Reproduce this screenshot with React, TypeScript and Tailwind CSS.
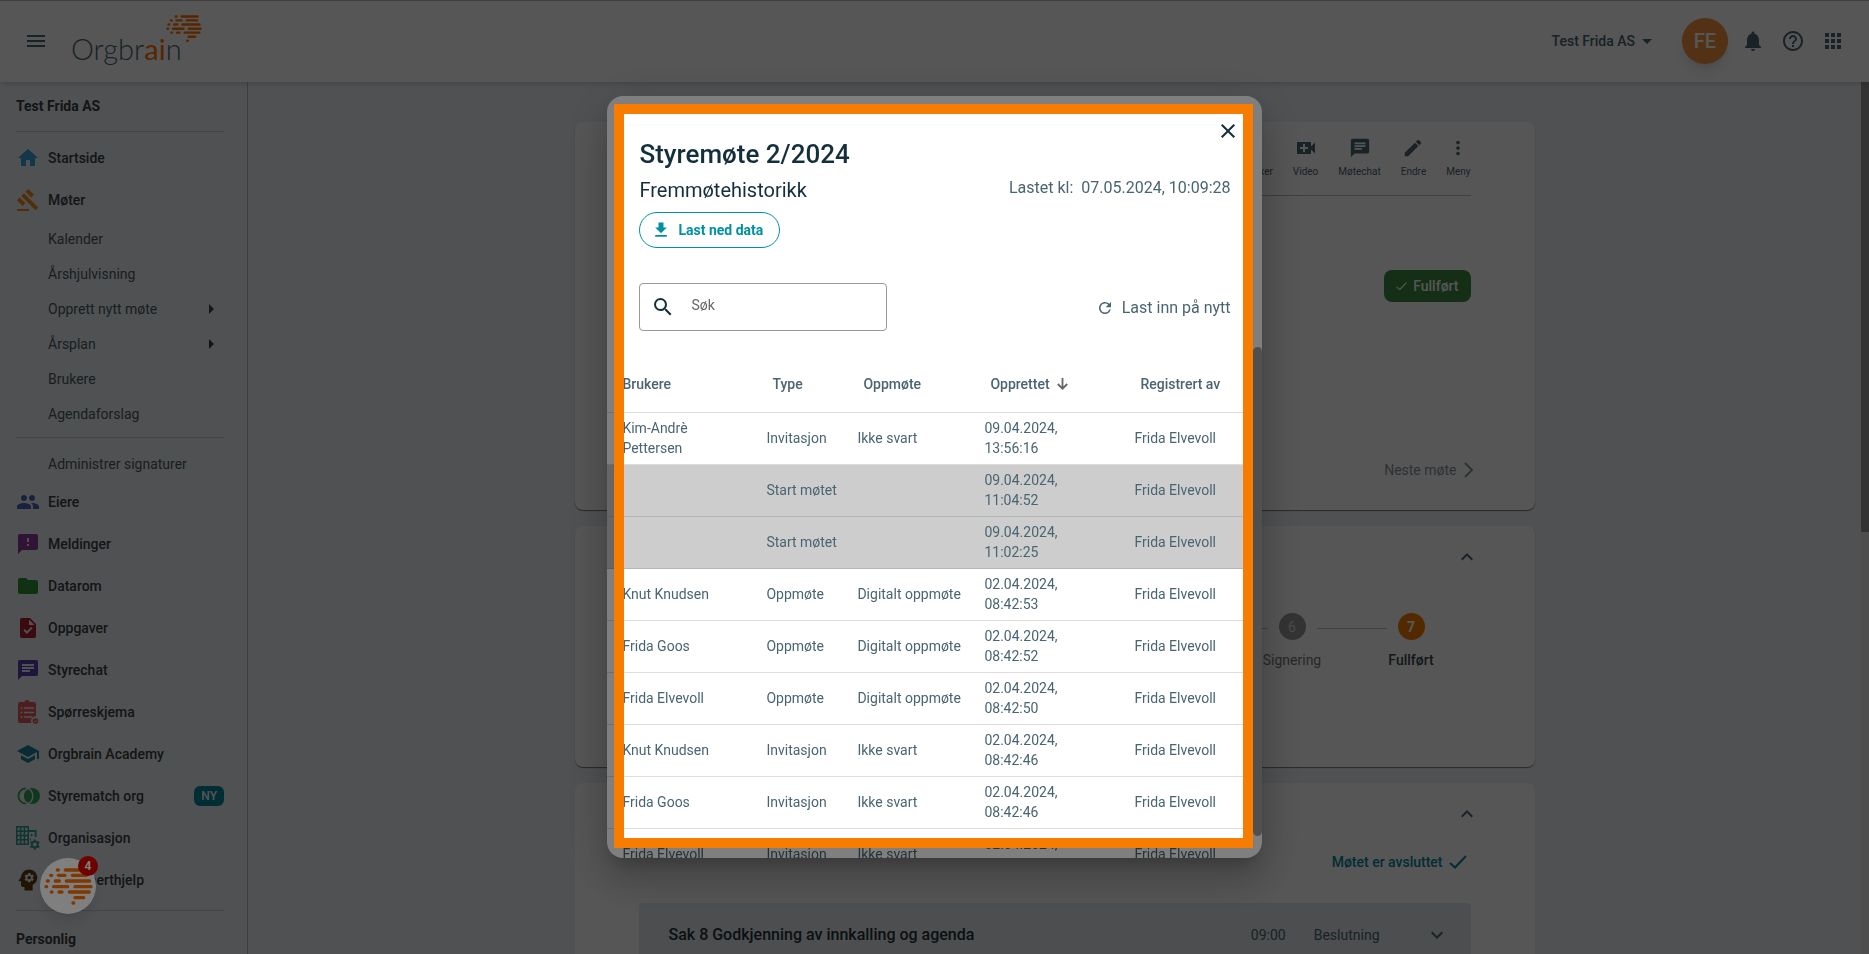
import React from "react";
import {
  MdApps,
  MdArrowDropDown,
  MdArrowRight,
  MdChat,
  MdClose,
  MdEdit,
  MdFeedback,
  MdFileDownload,
  MdFolder,
  MdGavel,
  MdHelpOutline,
  MdHome,
  MdKeyboardArrowDown,
  MdKeyboardArrowUp,
  MdMenu,
  MdMoreVert,
  MdNotifications,
  MdPeople,
  MdPerson,
  MdPsychology,
  MdRefresh,
  MdSchool,
  MdSearch,
  MdTask,
  MdVideoCall,
} from "react-icons/md";

const BrainLogo = ({ className }: { className: string }) => (
  <svg
    viewBox="0 0 147 111"
    className={className}
    fill="none"
    stroke="#ff7000"
    strokeWidth="10"
    strokeLinecap="round"
  >
    <path d="M40 6h3M64 6h65" />
    <path d="M20 22h3M43 22h20M85 22h42" />
    <path d="M10 39h3M34 39h12M67 39h70" />
    <path d="M6 56h2M29 56h42M93 56h48" />
    <path d="M22 72h2M45 72h9M76 72h60" />
    <path d="M93 89h26" />
    <path d="M87 105h2" />
  </svg>
);

const ThinCheck = ({ className }: { className: string }) => (
  <svg viewBox="0 0 18 14" className={className} fill="none" stroke="currentColor" strokeWidth="2">
    <path d="M1 8l5 4.500L17 1" />
  </svg>
);

const SurveyIcon = () => (
  <svg viewBox="0 0 24 24" className="size-6 shrink-0">
    <path
      fill="#e05a5a"
      d="M4 2h4.200a3 3 0 0 1 5.600 0H18a2 2 0 0 1 2 2v12.400a4.600 4.600 0 0 0-4.600 6.600H4a2 2 0 0 1-2-2V4a2 2 0 0 1 2-2z"
    />
    <path
      stroke="#edf1f5"
      strokeWidth="1.700"
      d="M4.500 8h2M8 8h10M4.500 12.500h2M8 12.500h10M4.500 17h2M8 17h8"
    />
    <circle cx="19.500" cy="21" r="2.800" fill="#e05a5a" />
    <path d="M18.200 21l1 1 1.700-1.900" stroke="#edf1f5" fill="none" strokeWidth=".8" />
  </svg>
);

const MatchIcon = () => (
  <svg viewBox="0 0 24 24" className="size-6 shrink-0">
    <path
      d="M10 4.400A7.100 7.100 0 1 0 10 19.600"
      fill="none"
      stroke="#35a35c"
      strokeWidth="1.800"
    />
    <circle cx="16" cy="12" r="8" fill="#35a35c" />
    <path
      d="M12 4.300a8.600 8.600 0 0 1 0 15.400a8.600 8.600 0 0 1 0-15.400z"
      fill="#35a35c"
      stroke="#edf1f5"
      strokeWidth="1.400"
    />
  </svg>
);

const OrganisationIcon = () => (
  <svg viewBox="0 0 24 24" className="size-6 shrink-0" fill="none" stroke="#2f9c8f">
    <path strokeWidth="1.600" d="M.8.800h11.400v17.400H.8zM.8 5.200h11.400M.8 9.500h11.400M.8 13.800h11.400M4.600.800v17.400M8.400.800v17.400" />
    <path strokeWidth="1.800" d="M12 5h7.600v6M14.500 9h2M14 13.500h1" />
    <circle cx="18.800" cy="18.600" r="3" strokeWidth="2" />
    <path strokeWidth="1.800" d="M18.800 13.400v2M18.800 21.800v2M14.300 16l1.700 1M21.600 20.200l1.700 1M14.300 21.200l1.700-1M21.600 17l1.700-1" />
  </svg>
);

const menu = [
  { name: "Eiere", icon: <MdPeople className="size-6 text-[#4763b8]" /> },
  { name: "Meldinger", icon: <MdFeedback className="size-6 text-[#933a9e]" /> },
  { name: "Datarom", icon: <MdFolder className="size-6 text-[#33913a]" /> },
  { name: "Oppgaver", icon: <MdTask className="size-6 text-[#b0202a]" /> },
  { name: "Styrechat", icon: <MdChat className="size-6 text-[#5e3ba8]" /> },
  { name: "Spørreskjema", icon: <SurveyIcon /> },
  { name: "Orgbrain Academy", icon: <MdSchool className="size-6 text-[#1d8496]" /> },
  { name: "Styrematch org", icon: <MatchIcon />, badge: "NY" },
  { name: "Organisasjon", icon: <OrganisationIcon /> },
  { name: "Få eksperthjelp", icon: <MdPsychology className="size-7 -mx-[2px] text-[#5c3f0c]" /> },
];

const subMenu = [
  { name: "Kalender" },
  { name: "Årshjulvisning" },
  { name: "Opprett nytt møte", more: true },
  { name: "Årsplan", more: true },
  { name: "Brukere" },
  { name: "Agendaforslag" },
];

const steps = [
  { nr: 6, name: "Signering" },
  { nr: 7, name: "Fullført", active: true },
];

const rows = [
  { user: "Kim-Andrè Pettersen", type: "Invitasjon", status: "Ikke svart", created: "09.04.2024, 13:56:16" },
  { user: "", type: "Start møtet", status: "", created: "09.04.2024, 11:04:52" },
  { user: "", type: "Start møtet", status: "", created: "09.04.2024, 11:02:25" },
  { user: "Knut Knudsen", type: "Oppmøte", status: "Digitalt oppmøte", created: "02.04.2024, 08:42:53" },
  { user: "Frida Goos", type: "Oppmøte", status: "Digitalt oppmøte", created: "02.04.2024, 08:42:52" },
  { user: "Frida Elvevoll", type: "Oppmøte", status: "Digitalt oppmøte", created: "02.04.2024, 08:42:50" },
  { user: "Knut Knudsen", type: "Invitasjon", status: "Ikke svart", created: "02.04.2024, 08:42:46" },
  { user: "Frida Goos", type: "Invitasjon", status: "Ikke svart", created: "02.04.2024, 08:42:46" },
  { user: "Frida Elvevoll", type: "Invitasjon", status: "Ikke svart", created: "02.04.2024, 08:42:46" },
];

const MenuItem = ({
  name,
  icon,
  badge,
}: {
  name: string;
  icon: React.ReactNode;
  badge?: string;
}) => (
  <a href="#" className="h-[42px] flex items-center gap-2 font-medium text-[#3c4043]">
    {icon}
    {name}
    {badge && (
      <span className="ml-auto h-5 px-[7px] rounded-md bg-[#00899b] text-white text-xs leading-5">
        {badge}
      </span>
    )}
  </a>
);

const SubItem = ({ name, more }: { name: string; more?: boolean }) => (
  <a href="#" className="h-[35px] flex items-center justify-between pl-8 pr-px text-[#4a5a62]">
    {name}
    {more && <MdArrowRight className="size-6 text-[#37474f]" />}
  </a>
);

const Header = () => (
  <header className="relative z-10 h-[82px] shrink-0 bg-white border-t border-[#bbb] shadow-md flex items-center justify-between px-6 pb-px text-[#4a6572]">
    <div className="flex items-center">
      <button aria-label="Meny">
        <MdMenu className="size-6" />
      </button>
      <a href="#" className="relative ml-[23px] mt-4 text-[29px] leading-8 font-light font-[Lato,sans-serif]">
        Orgbr
        <span className="text-[#ff7000] font-normal">ai</span>n
        <BrainLogo className="absolute left-[95px] -top-[18px] w-9" />
      </a>
    </div>
    <div className="flex items-center">
      <button className="flex items-center text-sm font-medium mr-[23px]">
        Test Frida AS
        <MdArrowDropDown className="size-6" />
      </button>
      <button className="size-[46px] rounded-full bg-[#f5913c] text-white text-xl font-medium shadow-lg mr-[13px]">
        FE
      </button>
      <div className="flex gap-4">
        <button aria-label="Varsler">
          <MdNotifications className="size-6" />
        </button>
        <button aria-label="Hjelp">
          <MdHelpOutline className="size-6" />
        </button>
        <button aria-label="Apper">
          <MdApps className="size-6" />
        </button>
      </div>
    </div>
  </header>
);

const Sidebar = () => (
  <nav className="w-62 shrink-0 overflow-hidden border-r border-[#b4b8bc] pl-4 pr-[23px] text-sm">
    <h2 className="h-12 flex items-center font-bold text-[#3c4043]">Test Frida AS</h2>
    <div className="border-t border-[#c9cdd1] mt-px mb-[5px]" />
    <MenuItem name="Startside" icon={<MdHome className="size-6 text-[#3aa0d8]" />} />
    <MenuItem name="Møter" icon={<MdGavel className="size-6 text-[#f08a1c]" />} />
    {subMenu.map((item) => (
      <SubItem key={item.name} {...item} />
    ))}
    <div className="border-t border-[#c9cdd1] mt-[6px] mb-2" />
    <SubItem name="Administrer signaturer" />
    {menu.map((item) => (
      <MenuItem key={item.name} {...item} />
    ))}
    <div className="border-t border-[#c9cdd1] mt-[9px]" />
    <h2 className="h-14 flex items-center font-bold text-[#3c4043]">Personlig</h2>
  </nav>
);

const tools = [
  { name: "Deltaker", icon: <MdPerson className="size-4" /> },
  { name: "Video", icon: <MdVideoCall className="size-6" /> },
  { name: "Møtechat", icon: <MdChat className="size-[22px]" /> },
  { name: "Endre", icon: <MdEdit className="size-[22px]" /> },
  { name: "Meny", icon: <MdMoreVert className="size-[22px]" /> },
];

const MeetingPage = () => (
  <main className="flex-1 overflow-hidden px-8 pt-10 text-sm text-[#4a6572]">
    <div className="max-w-240 mx-auto flex flex-col gap-4">
      <section className="h-[388px] rounded-lg bg-white shadow-[0_1px_1px_rgba(0,0,0,0.5)] px-16 flex flex-col">
        <div className="h-[74px] border-b border-[#bbb] flex justify-end gap-5 pt-[14px] text-[10px] leading-4">
          {tools.map((tool) => (
            <button key={tool.name} className="h-12 flex flex-col items-center">
              <span className="h-6 mb-1 grid place-items-center">{tool.icon}</span>
              {tool.name}
            </button>
          ))}
        </div>
        <span className="mt-[74px] self-end h-8 px-3 rounded-lg bg-[#3f8a42] text-white font-medium flex items-center gap-[6px]">
          <ThinCheck className="w-[11px]" />
          Fullført
        </span>
        <button className="mt-auto mb-[28px] self-end flex items-center text-[#8495a0]">
          Neste møte
          <svg viewBox="0 0 16 24" className="w-4 h-6 ml-1 -mr-[6px]" fill="none" stroke="currentColor" strokeWidth="2">
            <path d="M4 5l7 7-7 7" />
          </svg>
        </button>
      </section>

      <section className="h-[241px] rounded-lg bg-white shadow-[0_1px_1px_rgba(0,0,0,0.5)] px-16 pt-[19px]">
        <button aria-label="Skjul prosess" className="block ml-auto -mr-2">
          <MdKeyboardArrowUp className="size-6" />
        </button>
        <ol className="mt-11 flex justify-end">
          {steps.map((step) => (
            <li
              key={step.nr}
              className="relative w-[119px] flex flex-col items-center text-[#777]"
            >
              <span className="absolute top-[15px] right-1/2 w-[70px] mr-6 border-t border-[#bbb]" />
              <span
                className={
                  step.active
                    ? "size-[27px] rounded-full bg-[#f57c00] text-white font-bold grid place-items-center"
                    : "size-[27px] rounded-full bg-[#999] text-[#ddd] grid place-items-center"
                }
              >
                {step.nr}
              </span>
              <span className={step.active ? "mt-[10px] font-medium text-[#37474f]" : "mt-[10px]"}>
                {step.name}
              </span>
            </li>
          ))}
        </ol>
      </section>

      <section className="h-[400px] rounded-lg bg-white px-16 pt-[19px] flex flex-col">
        <button aria-label="Skjul agenda" className="self-end -mr-2">
          <MdKeyboardArrowUp className="size-6" />
        </button>
        <p className="self-end mt-6 h-6 flex items-center gap-[6px] pr-1 font-medium text-[#00899b]">
          Møtet er avsluttet
          <ThinCheck className="w-[18px]" />
        </p>
        <div className="mt-[29px] h-16 rounded bg-[#e2e7eb] pl-[30px] pr-[22px] flex items-center">
          <h3 className="text-base font-medium text-[#263238]">
            Sak 8 Godkjenning av innkalling og agenda
          </h3>
          <span className="ml-auto">09:00</span>
          <span className="ml-7 mr-[45px]">Beslutning</span>
          <MdKeyboardArrowDown className="size-6" />
        </div>
      </section>
    </div>
  </main>
);

const HistoryTable = () => (
  <table className="w-full table-fixed text-left text-sm text-[#4a6572]">
    <thead>
      <tr className="h-14 border-b border-[#ddd]">
        <th className="w-[143px] pl-[15px] font-medium">Brukere</th>
        <th className="w-[91px] pl-[22px] font-medium">Type</th>
        <th className="w-[127px] pl-[22px] font-medium">Oppmøte</th>
        <th className="w-[150px] pl-[22px] font-medium">
          <button className="flex items-center gap-[7px]">
            Opprettet
            <svg viewBox="0 0 11 12" className="w-[11px]" fill="none" stroke="#666" strokeWidth="1.800">
              <path d="M5.500 0v10.500M.8 6l4.700 4.700L10.200 6" />
            </svg>
          </button>
        </th>
        <th className="pl-[22px] font-medium">Registrert av</th>
      </tr>
    </thead>
    <tbody>
      {rows.map((row, i) => (
        <tr
          key={i}
          className={
            row.user
              ? "h-13 border-b border-[#ddd]"
              : "h-13 border-b border-[#b5b8ba] bg-[#cdcdcd]"
          }
        >
          <td className="pl-[15px] pr-8">{row.user}</td>
          <td className="pl-4 whitespace-nowrap">{row.type}</td>
          <td className="pl-4 whitespace-nowrap">{row.status}</td>
          <td className="pl-4 pr-12">{row.created}</td>
          <td className="pl-4">Frida Elvevoll</td>
        </tr>
      ))}
    </tbody>
  </table>
);

const HistoryDialog = () => (
  <div className="fixed inset-0 z-20 bg-black/32 flex items-center justify-center">
    <div
      role="dialog"
      aria-labelledby="dialog-title"
      className="relative w-[35vw] h-[calc(100vh-192px)] overflow-hidden rounded-2xl bg-white pr-[9px] text-[#4a6572] shadow-[0_11px_15px_-7px_rgba(0,0,0,0.2),0_24px_38px_3px_rgba(0,0,0,0.14),0_9px_46px_8px_rgba(0,0,0,0.12)]"
    >
      <div className="pl-8 pr-[22px] pt-[23px]">
        <button aria-label="Lukk" className="block ml-auto -mr-[9px] text-[#132f3c]">
          <MdClose className="size-6" />
        </button>
        <h1 id="dialog-title" className="-mt-[5px] text-[26px] leading-8 font-medium text-[#132f3c]">
          Styremøte 2/2024
        </h1>
        <div className="mt-1 flex justify-between">
          <h2 className="text-xl leading-8 text-[#132f3c]">Fremmøtehistorikk</h2>
          <p className="leading-7">
            Lastet kl:<span className="ml-2">07.05.2024, 10:09:28</span>
          </p>
        </div>
        <button className="mt-[6px] h-9 pl-[11px] pr-4 flex items-center gap-[7px] rounded-full border border-[#0090a0] text-sm font-bold text-[#0090a0]">
          <MdFileDownload className="size-5" />
          Last ned data
        </button>
        <div className="mt-[35px] flex items-center justify-between">
          <div className="w-62 h-12 flex items-center rounded border border-[#999] pl-[11px]">
            <label htmlFor="search" aria-label="Søk">
              <MdSearch className="size-6 text-[#132f3c]" />
            </label>
            <input
              id="search"
              placeholder="Søk"
              className="w-full px-4 pb-1 text-sm outline-none placeholder:text-[#666]"
            />
          </div>
          <button className="flex items-center gap-2 pt-px">
            <MdRefresh className="size-[18px]" />
            Last inn på nytt
          </button>
        </div>
      </div>
      <div className="mt-[25px]">
        <HistoryTable />
      </div>
      <div className="absolute right-0 top-[251px] bottom-[22px] w-[9px] rounded-full bg-[#a0a0a0]" />
    </div>
  </div>
);

// Orange frame around the dialog, dims everything outside of it
const Spotlight = () => (
  <div className="pointer-events-none fixed inset-0 z-40 flex items-center justify-center overflow-hidden">
    <div className="w-[35vw] h-[calc(100vh-192px)] pl-[7px] pt-2 pr-[9px] pb-[10px]">
      <div className="size-full border-10 border-[#f77c00] shadow-[0_0_0_2000px_rgba(0,0,0,0.5)]" />
    </div>
  </div>
);

const ChatBubble = () => (
  <button
    aria-label="Chat"
    className="fixed left-10 bottom-10 z-30 size-14 rounded-full bg-white shadow-lg grid place-items-center"
  >
    <BrainLogo className="w-[49px]" />
    <span className="absolute -top-[2px] -right-[2px] size-5 rounded-full bg-[#dd0000] text-white text-xs leading-5 font-bold">
      4
    </span>
  </button>
);

const App = () => {
  return (
    <div className="h-screen overflow-hidden flex flex-col bg-[#edf1f5] font-[Roboto,sans-serif]">
      <Header />
      <div className="flex-1 min-h-0 flex">
        <Sidebar />
        <MeetingPage />
        <div className="w-2 bg-[#e8e8e8]">
          <div className="h-[450px] bg-[#999]" />
        </div>
      </div>
      <HistoryDialog />
      <ChatBubble />
      <Spotlight />
    </div>
  );
};

export default App;
